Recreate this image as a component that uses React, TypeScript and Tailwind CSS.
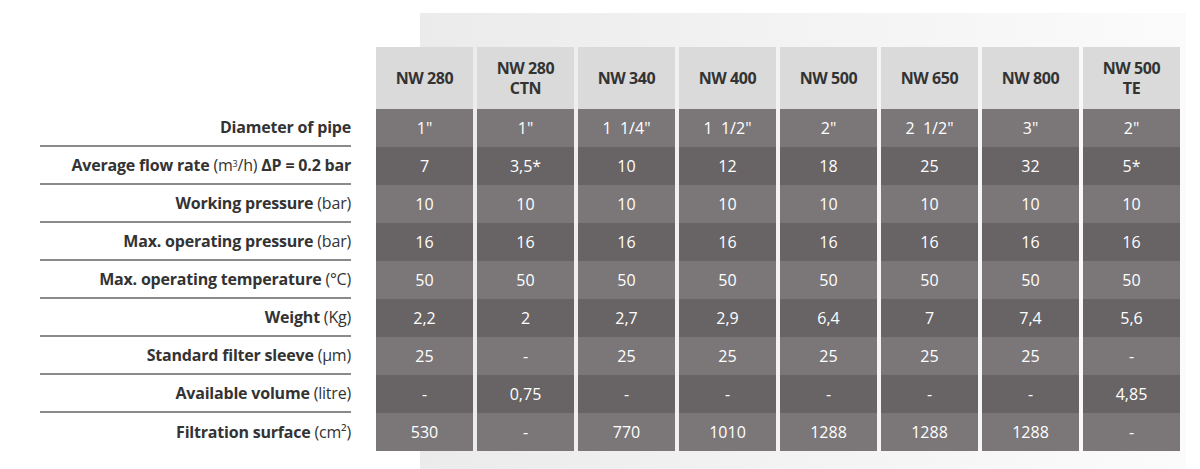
import React from 'react'

type Row = {
    label: string
    unit?: React.ReactNode
    values: string[]
}

const models: [string, string?][] = [
    ['NW 280'],
    ['NW 280', 'CTN'],
    ['NW 340'],
    ['NW 400'],
    ['NW 500'],
    ['NW 650'],
    ['NW 800'],
    ['NW 500', 'TE'],
]

const rows: Row[] = [
    { label: 'Diameter of pipe', values: ['1"', '1"', '1  1/4"', '1  1/2"', '2"', '2  1/2"', '3"', '2"'] },
    {
        label: 'Average flow rate',
        unit: (
            <>
                <span className="font-normal">
                    {' '}(m<sup className="text-[9px]">3</sup>/h)
                </span>{' '}
                ΔP = 0.2 bar
            </>
        ),
        values: ['7', '3,5*', '10', '12', '18', '25', '32', '5*'],
    },
    { label: 'Working pressure', unit: <span className="font-normal"> (bar)</span>, values: ['10', '10', '10', '10', '10', '10', '10', '10'] },
    { label: 'Max. operating pressure', unit: <span className="font-normal"> (bar)</span>, values: ['16', '16', '16', '16', '16', '16', '16', '16'] },
    { label: 'Max. operating temperature', unit: <span className="font-normal"> (°C)</span>, values: ['50', '50', '50', '50', '50', '50', '50', '50'] },
    { label: 'Weight', unit: <span className="font-normal"> (Kg)</span>, values: ['2,2', '2', '2,7', '2,9', '6,4', '7', '7,4', '5,6'] },
    { label: 'Standard filter sleeve', unit: <span className="font-normal"> (µm)</span>, values: ['25', '-', '25', '25', '25', '25', '25', '-'] },
    { label: 'Available volume', unit: <span className="font-normal"> (litre)</span>, values: ['-', '0,75', '-', '-', '-', '-', '-', '4,85'] },
    { label: 'Filtration surface', unit: <span className="font-normal"> (cm²)</span>, values: ['530', '-', '770', '1010', '1288', '1288', '1288', '-'] },
]

const App: React.FC = () => {
    return (
        <div
            className="flex h-[469px] w-[1200px] overflow-hidden bg-white text-[#333]"
            style={{ fontFamily: '"Open Sans", "Liberation Sans", sans-serif' }}
        >
            {/* labels */}
            <div className="ml-[40px] flex w-[311px] flex-col pt-[109px]">
                {rows.map((row, i) => (
                    <div
                        key={row.label}
                        className={`flex h-[38px] items-center justify-end whitespace-nowrap text-[16px] font-bold tracking-[-0.2px] ${
                            i < rows.length - 1 ? 'border-b-2 border-[#8a8a8a]' : ''
                        }`}
                    >
                        <span>
                            {row.label}
                            {row.unit}
                        </span>
                    </div>
                ))}
            </div>

            {/* table on its panel */}
            <div className="ml-[69px] mr-[14px] mt-[13px] flex-1 bg-gradient-to-r from-[#ebebeb] via-[#f3f3f3] to-[#fbfbfb] pt-[34px]">
                <div className="-ml-[44px] flex gap-[4px]">
                    {models.map(([name, sub], c) => (
                        <div key={c} className="flex w-[97px] flex-col">
                            <div className="flex h-[62px] items-center justify-center bg-[#dadada] text-center text-[16px] font-bold leading-[20px] tracking-[-0.4px] text-[#333]">
                                <span>
                                    {name}
                                    {sub && (
                                        <>
                                            <br />
                                            {sub}
                                        </>
                                    )}
                                </span>
                            </div>
                            {rows.map((row, r) => (
                                <div
                                    key={r}
                                    className={`flex h-[38px] items-center justify-center whitespace-pre text-[16px] text-white ${
                                        r % 2 === 0 ? 'bg-[#7b7779]' : 'bg-[#686365]'
                                    }`}
                                >
                                    {row.values[c]}
                                </div>
                            ))}
                        </div>
                    ))}
                </div>
            </div>
        </div>
    )
}

export default App
